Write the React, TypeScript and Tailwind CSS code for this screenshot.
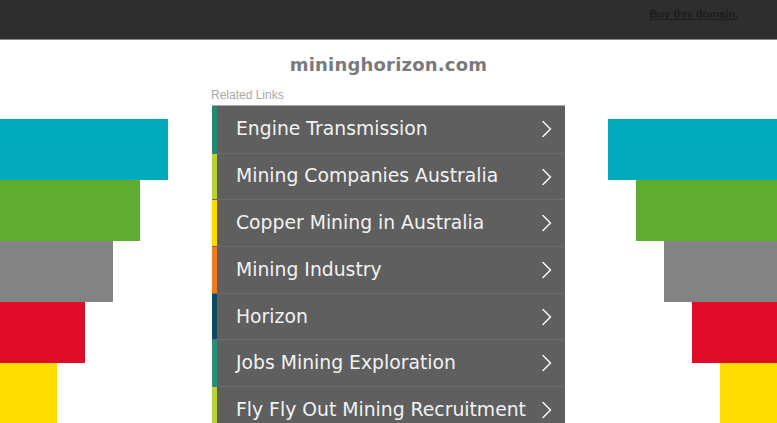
import React from 'react';

const links = [
  { label: 'Engine Transmission', stripe: 'bg-[#25896f]' },
  { label: 'Mining Companies Australia', stripe: 'bg-[#b5d334]' },
  { label: 'Copper Mining in Australia', stripe: 'bg-[#ffd800]' },
  { label: 'Mining Industry', stripe: 'bg-[#f47a1f]' },
  { label: 'Horizon', stripe: 'bg-[#0b4a62]' },
  { label: 'Jobs Mining Exploration', stripe: 'bg-[#26917a]' },
  { label: 'Fly Fly Out Mining Recruitment', stripe: 'bg-[#b8d436]' },
];

const bars = [
  { color: 'bg-[#02abbc]', left: 'w-[168px]', right: 'w-[169px]' },
  { color: 'bg-[#5fac30]', left: 'w-[140px]', right: 'w-[141px]' },
  { color: 'bg-[#838383]', left: 'w-[113px]', right: 'w-[113px]' },
  { color: 'bg-[#df0c2a]', left: 'w-[85px]', right: 'w-[85px]' },
  { color: 'bg-[#ffdd00]', left: 'w-[57px]', right: 'w-[57px]' },
];

const Chevron: React.FC = () => (
  <svg width="12" height="18" viewBox="0 0 12 18" fill="none" className="shrink-0">
    <path d="M2 1.5 L9.5 9 L2 16.5" stroke="#f2f2f2" strokeWidth="1.6" strokeLinecap="round" strokeLinejoin="round" />
  </svg>
);

const App: React.FC = () => {
  return (
    <div className="w-[777px] h-[423px] overflow-hidden bg-white">
      <div className="h-[40px] bg-[#2e2e2e] border-b border-[#8a8a8a] flex justify-end pr-[39px]">
        <a
          href="#"
          className="mt-[6px] text-[11px] font-bold text-[#1c1c1c] underline font-['Liberation_Sans',Arial,sans-serif]"
        >
          Buy this domain.
        </a>
      </div>

      <div className="text-center pt-[11px] h-[46px] text-[18px] font-bold text-[#7a7a7a] tracking-[0.2px] font-['DejaVu_Sans',Verdana,sans-serif]">
        mininghorizon.com
      </div>

      <div className="flex">
        <div className="flex-1 flex flex-col items-start pt-[33px]">
          {bars.map((b, i) => (
            <div key={i} className={`${b.color} ${b.left} h-[61px]`} />
          ))}
        </div>

        <div className="w-[353px]">
          <div className="text-[12px] text-[#a8a8a8] -ml-[1px] h-[19px] font-['Liberation_Sans',Arial,sans-serif]">
            Related Links
          </div>
          <div className="border-t border-[#a9a9a9]">
            {links.map((l, i) => (
              <div
                key={l.label}
                className={`flex h-[46.7px] bg-[#5f5f5f] ${i > 0 ? 'border-t border-[#6b6b6b]' : ''}`}
              >
                <div className={`w-[5px] shrink-0 ${l.stripe}`} />
                <div className="flex-1 flex items-center justify-between pl-[19px] pr-[12px] text-[18.8px] text-[#f2f2f2] font-['DejaVu_Sans',Verdana,sans-serif]">
                  <span className="whitespace-nowrap">{l.label}</span>
                  <Chevron />
                </div>
              </div>
            ))}
          </div>
        </div>

        <div className="flex-1 flex flex-col items-end pt-[33px]">
          {bars.map((b, i) => (
            <div key={i} className={`${b.color} ${b.right} h-[61px]`} />
          ))}
        </div>
      </div>
    </div>
  );
};

export default App;
